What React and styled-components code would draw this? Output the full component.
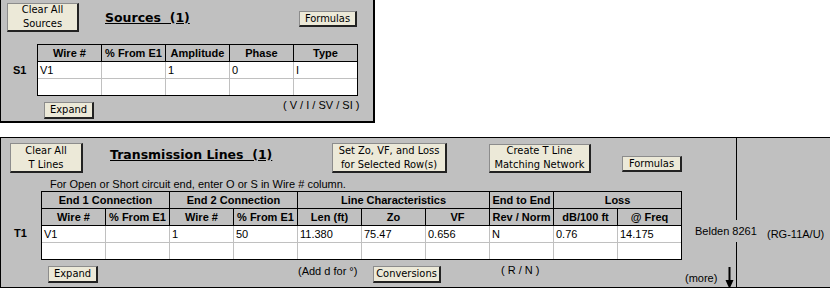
import React from "react";
import styled, { createGlobalStyle } from "styled-components";

const Global = createGlobalStyle`
  html, body { margin: 0; padding: 0; background: #fff; }
  body {
    width: 830px; height: 288px; overflow: hidden;
    font-family: "Liberation Sans", Arial, sans-serif;
    font-size: 11px; color: #000;
  }
  * { box-sizing: border-box; }
`;

const Page = styled.div`
  display: flex;
  flex-direction: column;
  gap: 14px;
  width: 830px;
`;

const Sheet = styled.section`
  position: relative;
  background: #c0c0c0;
  border: 1px solid #000;
  border-top: none;
`;

const SourcesPanel = styled(Sheet)`
  width: 375px;
  height: 123px;
  border-right-width: 2px;
  border-bottom-width: 2px;
  display: flex;
  flex-direction: column;
`;

const LinesPanel = styled(Sheet)`
  width: 830px;
  height: 151px;
  border-top: 1px solid #000;
  border-right: none;
  display: flex;
`;

const LinesMain = styled.div`
  width: 735px;
  display: flex;
  flex-direction: column;
  padding-top: 5px;
`;

const RightArea = styled.div`
  flex: 1;
  border-left: 1px solid #000;
  padding: 90px 0 0 30px;
  line-height: 13px;
  white-space: nowrap;
`;

const ToolRow = styled.div`
  display: grid;
  grid-template-columns: ${(p) => p.$cols};
  align-items: start;
  padding-left: ${(p) => p.$pad}px;
  padding-top: ${(p) => p.$top || 0}px;
  height: ${(p) => p.$h}px;
`;

const Btn = styled.button`
  width: ${(p) => (p.$w ? `${p.$w}px` : "100%")};
  height: ${(p) => p.$h}px;
  margin: ${(p) => p.$mt || 0}px 0 0 0;
  padding: 0;
  background: #ece9d8;
  border-style: solid;
  border-width: 1px 2px 2px 1px;
  border-color: #8c8c8c #222 #222 #8c8c8c;
  font-family: "DejaVu Sans Condensed", "DejaVu Sans", sans-serif;
  font-size: 11px;
  line-height: 14px;
  color: #000;
  display: flex;
  align-items: center;
  justify-content: center;
  text-align: center;
  white-space: pre;
`;

const Title = styled.h1`
  margin: ${(p) => p.$mt}px 0 0 0;
  padding-left: ${(p) => p.$indent}px;
  font-family: "DejaVu Sans", Verdana, sans-serif;
  font-weight: bold;
  font-size: 12.5px;
  line-height: 16px;
  text-decoration: underline;
  white-space: pre;
`;

const Note = styled.p`
  margin: 5px 0 0 0;
  padding-left: 49px;
  line-height: 13px;
  white-space: nowrap;
`;

const TableRow = styled.div`
  display: flex;
  margin-top: ${(p) => p.$mt}px;
`;

const RowLabel = styled.div`
  width: ${(p) => p.$w}px;
  padding: ${(p) => p.$top}px 0 0 ${(p) => p.$left}px;
  font-weight: bold;
  line-height: 16px;
`;

const Grid = styled.div`
  display: grid;
  grid-template-columns: ${(p) => p.$cols};
  border: 1px solid #000;
`;

const Cell = styled.div`
  grid-column: span ${(p) => p.$span || 1};
  height: ${(p) => (p.$lastRow ? 16 : 17)}px;
  line-height: 16px;
  background: ${(p) => (p.$head ? "#c0c0c0" : "#fff")};
  border-right: ${(p) => (p.$lastCol ? "none" : `1px solid ${p.$head ? "#000" : "#c0c0c0"}`)};
  border-bottom: ${(p) => (p.$lastRow ? "none" : `1px solid ${p.$head ? "#000" : "#c0c0c0"}`)};
  font-weight: ${(p) => (p.$head ? "bold" : "normal")};
  text-align: ${(p) => (p.$head ? "center" : "left")};
  padding-left: ${(p) => (p.$head ? 0 : 2)}px;
  white-space: nowrap;
  overflow: hidden;
`;

const Caption = styled.span`
  margin-top: ${(p) => p.$mt || 0}px;
  padding-left: ${(p) => p.$left || 0}px;
  line-height: 13px;
  white-space: nowrap;
`;

const Overlay = styled.div`
  position: absolute;
  left: 689px;
  top: 82px;
  width: 66px;
  height: 22px;
  line-height: 22px;
  padding-left: 5px;
  background: #c0c0c0;
  white-space: nowrap;
`;

const ArrowSvg = styled.svg`
  display: block;
  margin-top: 1px;
`;

const srcHead = ["Wire #", "% From E1", "Amplitude", "Phase", "Type"];
const srcRows = [
  ["V1", "", "1", "0", "I"],
  ["", "", "", "", ""],
];

const tlGroups = [
  ["End 1 Connection", 2],
  ["End 2 Connection", 2],
  ["Line Characteristics", 3],
  ["End to End", 1],
  ["Loss", 2],
];
const tlHead = ["Wire #", "% From E1", "Wire #", "% From E1", "Len (ft)", "Zo", "VF", "Rev / Norm", "dB/100 ft", "@ Freq"];
const tlRows = [
  ["V1", "", "1", "50", "11.380", "75.47", "0.656", "N", "0.76", "14.175"],
  ["", "", "", "", "", "", "", "", "", ""],
];

function DataRows({ rows }) {
  return rows.map((r, ri) =>
    r.map((v, ci) => (
      <Cell key={`${ri}-${ci}`} $lastCol={ci === r.length - 1} $lastRow={ri === rows.length - 1}>
        {v}
      </Cell>
    ))
  );
}

function Arrow() {
  return (
    <ArrowSvg width="11" height="22" viewBox="0 0 11 22">
      <rect x="4.5" y="0" width="2" height="15" fill="#000" />
      <polygon points="1.5,13 9.5,13 5.5,22" fill="#000" />
    </ArrowSvg>
  );
}

export default function App() {
  return (
    <>
      <Global />
      <Page>
        <SourcesPanel>
          <ToolRow $cols="72px 220px 58px" $pad={6} $top={3} $h={32}>
            <Btn $h={29}>{"Clear All\nSources"}</Btn>
            <Title $mt={7} $indent={26}>{"Sources  (1)"}</Title>
            <Btn $h={16} $mt={8}>Formulas</Btn>
          </ToolRow>
          <TableRow $mt={12}>
            <RowLabel $w={36} $left={12} $top={18}>S1</RowLabel>
            <Grid $cols="64px 64px 64px 64px 63px">
              {srcHead.map((h, i) => (
                <Cell key={h} $head $lastCol={i === srcHead.length - 1}>{h}</Cell>
              ))}
              <DataRows rows={srcRows} />
            </Grid>
          </TableRow>
          <ToolRow $cols="50px 189px auto" $pad={43} $top={6} $h={23}>
            <Btn $h={17}>Expand</Btn>
            <span />
            <Caption $mt={-3}>( V / I / SV / SI )</Caption>
          </ToolRow>
        </SourcesPanel>

        <LinesPanel>
          <LinesMain>
            <ToolRow $cols="73px 249px 115px 42px 102px 31px 60px" $pad={9} $h={30}>
              <Btn $h={30}>{"Clear All\nT Lines"}</Btn>
              <Title $mt={4} $indent={27}>{"Transmission Lines  (1)"}</Title>
              <Btn $h={30}>{"Set Zo, VF, and Loss\nfor Selected Row(s)"}</Btn>
              <span />
              <Btn $h={29} $mt={1}>{"Create T Line\nMatching Network"}</Btn>
              <span />
              <Btn $h={16} $mt={13}>Formulas</Btn>
            </ToolRow>
            <Note>For Open or Short circuit end, enter O or S in Wire # column.</Note>
            <TableRow $mt={0}>
              <RowLabel $w={40} $left={13} $top={34}>T1</RowLabel>
              <Grid $cols="repeat(9, 64px) 63px">
                {tlGroups.map(([g, s], i) => (
                  <Cell key={g} $head $span={s} $lastCol={i === tlGroups.length - 1}>{g}</Cell>
                ))}
                {tlHead.map((h, i) => (
                  <Cell key={i} $head $lastCol={i === tlHead.length - 1}>{h}</Cell>
                ))}
                <DataRows rows={tlRows} />
              </Grid>
            </TableRow>
            <ToolRow $cols="50px 200px 75px 68px 60px 184px 39px 11px" $pad={47} $top={6} $h={28}>
              <Btn $h={17}>Expand</Btn>
              <span />
              <Caption $mt={-1}>(Add d for °)</Caption>
              <Btn $h={17}>Conversions</Btn>
              <span />
              <Caption $mt={-2}>( R / N )</Caption>
              <Caption $mt={6}>(more)</Caption>
              <Arrow />
            </ToolRow>
          </LinesMain>
          <RightArea>(RG-11A/U)</RightArea>
          <Overlay>Belden 8261</Overlay>
        </LinesPanel>
      </Page>
    </>
  );
}
